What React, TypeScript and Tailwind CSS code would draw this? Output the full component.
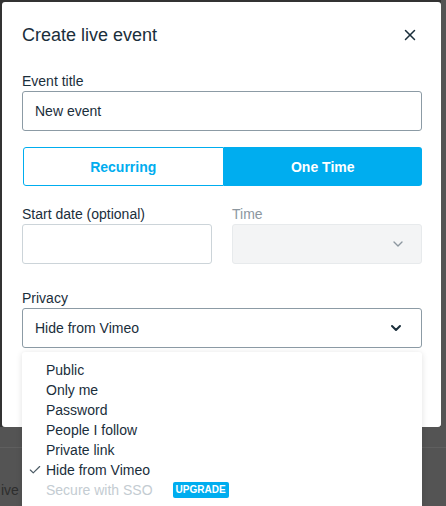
import { Check, ChevronDown, X } from "lucide-react";

const options = ["Public", "Only me", "Password", "People I follow", "Private link", "Hide from Vimeo"];

export default function App() {
  return (
    <div
      className="relative w-[446px] h-[506px] overflow-hidden bg-[#545454] text-[#1a2e3b]"
      style={{ fontFamily: '"Liberation Sans", Arial, sans-serif' }}
    >
      {/* Page behind the overlay */}
      <div className="h-[448px] border-b border-[#5f5f5f]" />
      <div className="pt-[34px] pl-px text-sm leading-4 text-[#2e2e2e]">ive</div>

      {/* Dark frame */}
      <div className="absolute left-0 top-0 w-[441px] h-[427px] bg-[#333333]" />

      {/* Modal */}
      <div className="absolute left-[2px] top-[2px] w-[439px] h-[425px] bg-white rounded-[3px] pl-5 pr-[19px] pt-[21px]">
        {/* Header */}
        <div className="flex items-center justify-between h-6">
          <h2 className="text-[18px] leading-6">Create live event</h2>
          <button className="mr-[3px] text-[#1a2e3b]">
            <X size={18} strokeWidth={2} />
          </button>
        </div>

        {/* Event title */}
        <label className="block mt-6 text-sm leading-5">Event title</label>
        <div className="h-10 border border-[#8c9ba5] rounded-[3px] pl-3 flex items-center text-sm">New event</div>

        {/* Recurring / One time */}
        <div className="mt-4 flex h-[39px] rounded-[3px] overflow-hidden">
          <button className="flex-1 border border-[#00adef] rounded-l-[3px] ml-px text-[#00adef] font-bold text-sm">
            Recurring
          </button>
          <button className="flex-1 bg-[#00adef] text-white font-bold text-sm">One Time</button>
        </div>

        {/* Date / time */}
        <div className="mt-[18px] grid grid-cols-2 gap-5">
          <div>
            <label className="block text-sm leading-5">Start date (optional)</label>
            <div className="h-10 border border-[#ccd4d9] rounded-[3px]" />
          </div>
          <div>
            <label className="block text-sm leading-5 text-[#8c979f]">Time</label>
            <div className="h-10 border border-[#e7eaec] bg-[#f3f4f5] rounded-[3px] flex items-center justify-end pr-[15px] text-[#8c979f]">
              <ChevronDown size={16} strokeWidth={2} />
            </div>
          </div>
        </div>

        {/* Privacy */}
        <label className="block mt-6 text-sm leading-5">Privacy</label>
        <div className="h-10 border border-[#8c9ba5] rounded-[3px] pl-3 pr-[17px] flex items-center justify-between text-sm">
          <span>Hide from Vimeo</span>
          <ChevronDown size={16} strokeWidth={3} />
        </div>
      </div>

      {/* Privacy dropdown */}
      <div className="absolute left-[22px] top-[352px] w-[400px] h-[170px] bg-white rounded-[3px] shadow-[0_1px_6px_rgba(0,0,0,0.12)] pt-2">
        {options.map((o) => (
          <div key={o} className="relative h-5 pl-6 text-sm leading-5">
            {o === "Hide from Vimeo" && (
              <Check size={14} strokeWidth={2} className="absolute left-[6px] top-[3px] text-[#4b5a64]" />
            )}
            {o}
          </div>
        ))}
        <div className="h-5 pl-6 flex items-center text-sm leading-5 text-[#c4ccd2]">
          Secure with SSO
          <span className="ml-5 h-4 px-[3px] rounded-[2px] bg-[#00adef] text-white text-[10px] font-bold leading-4">
            UPGRADE
          </span>
        </div>
      </div>
    </div>
  );
}
